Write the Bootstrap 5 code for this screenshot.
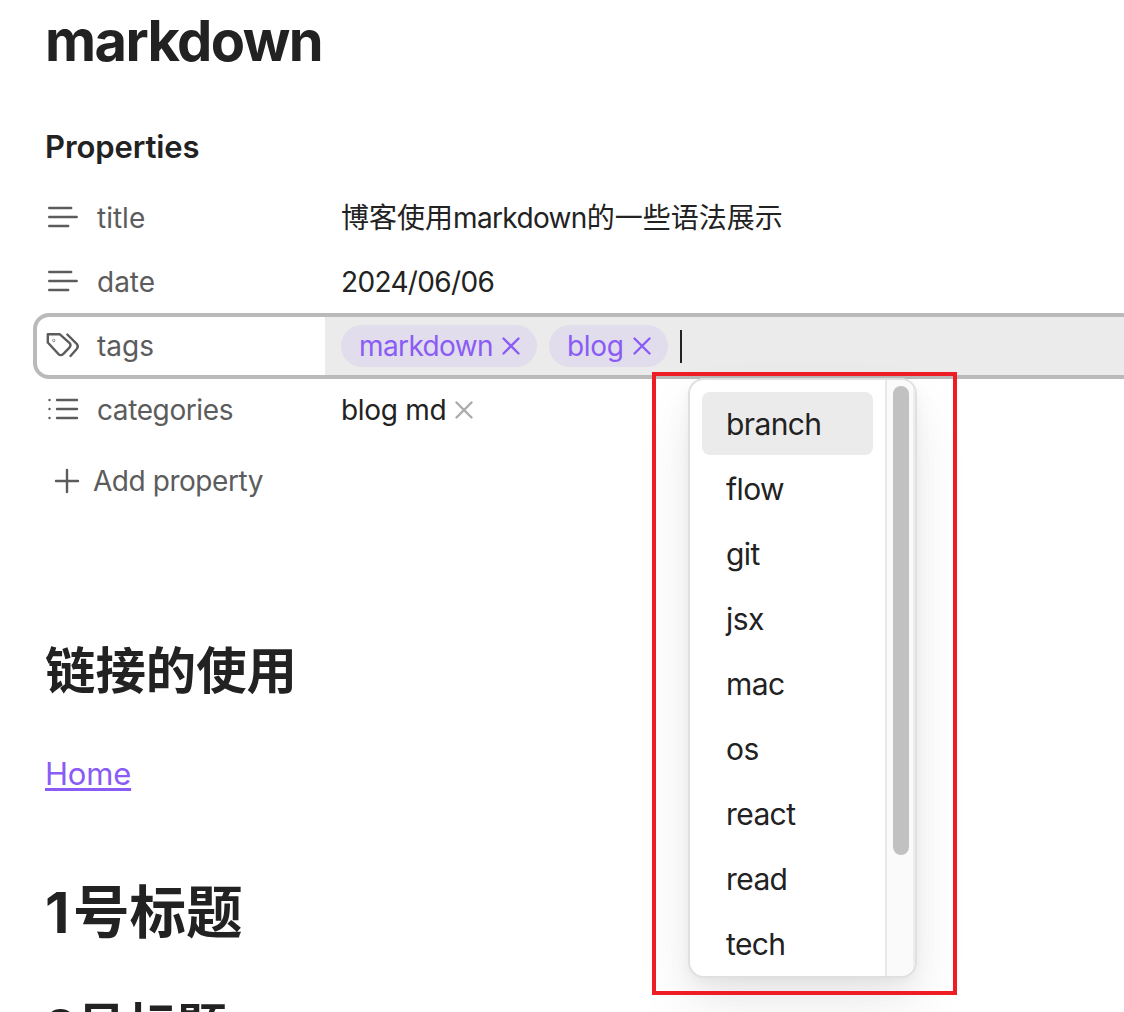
<!DOCTYPE html>
<html lang="zh-CN">
<head>
<meta charset="utf-8">
<meta name="viewport" content="width=device-width, initial-scale=1">
<title>markdown</title>
<link href="https://cdn.jsdelivr.net/npm/bootstrap@5.3.0/dist/css/bootstrap.min.css" rel="stylesheet">
<style>
  body { font-family: Inter, "Noto Sans CJK SC", sans-serif; font-size: 28px; color: #222; background: #fff; }
  .note { height: 1012px; padding-left: 45px; }
  .note-title { font-size: 56px; font-weight: 700; line-height: 82px; letter-spacing: -1.6px; }
  .props-heading { font-size: 31px; font-weight: 600; line-height: 40px; letter-spacing: -.1px; margin-top: 45px; margin-bottom: 22px; }
  .prop-row { height: 58px; margin: 0 -20px 6px -8px; }
  .prop-row.is-active { outline: 4px solid #bababa; border-radius: 12px; background: linear-gradient(90deg, #fff 288px, #ebebeb 288px); }
  .prop-key { width: 288px; color: #5c5c5c; padding-left: 8px; letter-spacing: -.4px; }
  .prop-key svg { width: 36px; height: 36px; margin-right: 16px; }
  .prop-key .short-key { letter-spacing: 0; }
  .prop-value { padding-left: 16px; }
  .latin-text { letter-spacing: -.65px; }
  .blog-text { letter-spacing: -.3px; }
  .line-icon { fill: none; stroke: currentColor; stroke-width: 2.4; stroke-linecap: round; stroke-linejoin: round; }
  .tag-pill { height: 42px; padding: 0 17px 0 18px; margin-right: 12px; background: #e1ddec; color: #8a5cf5; letter-spacing: -.6px; }
  .tag-pill .blog-text { letter-spacing: -.35px; }
  .close-icon { width: 18px; height: 18px; margin-left: 9px; }
  .caret { width: 2px; height: 33px; background: #222; }
  .add-prop { height: 60px; margin-top: 12px; padding-left: 4px; color: #5c5c5c; letter-spacing: -.45px; }
  .add-prop svg { width: 36px; height: 36px; margin-right: 8px; }
  .sec-a { font-size: 50.4px; font-weight: 700; line-height: 70px; margin-top: 125px; }
  .home-link { font-size: 31px; line-height: 46px; letter-spacing: -.2px; color: #8a5cf5; text-decoration-thickness: 3px; text-underline-offset: 3px; }
  .home-line { margin-top: 45px; }
  .sec-b { font-size: 56.6px; font-weight: 700; line-height: 80px; margin-top: 76px; }
  .sec-b .lead-digit { letter-spacing: 3.5px; }
  .sec-c { font-size: 50px; font-weight: 700; line-height: 70px; margin-top: 39px; }
  .callout-frame { left: 652px; top: 372px; width: 305px; height: 623px; border: 4px solid #ee1c25; z-index: 3; }
  .suggest { left: 688px; top: 378px; width: 229px; height: 600px; border: 2px solid #e0e0e0; border-radius: 16px; background: #fff; z-index: 2;
    box-shadow: 0 3px 8px rgba(0,0,0,.03), 0 12px 26px rgba(0,0,0,.045), 0 30px 60px rgba(0,0,0,.07); }
  .suggest-list { padding: 12px; font-size: 30px; letter-spacing: -.6px; }
  .suggest-item { height: 63px; margin-bottom: 2px; padding: 2px 0 0 24px; border-radius: 8px; }
  .suggest-item.selected { background: #ebebeb; }
  .suggest-track { width: 30px; border-left: 2px solid #e8e8e8; border-right: 2px solid #ededed; background: #fafafa; padding: 6px 4px 0 6px; }
  .suggest-thumb { width: 16px; height: 469px; background: #c1c1c1; }
</style>
<script src="https://cdn.jsdelivr.net/npm/bootstrap@5.3.0/dist/js/bootstrap.bundle.min.js"></script>
</head>
<body class="overflow-hidden">
<main class="note position-relative overflow-hidden">
  <h1 class="note-title m-0">markdown</h1>
  <div class="props-heading">Properties</div>

  <div class="prop-row d-flex">
    <div class="prop-key d-flex align-items-center"><svg class="line-icon" viewBox="0 0 36 36"><path d="M4.200 8h22M4.200 17h27.500M4.200 26h19"/></svg><span class="short-key">title</span></div>
    <div class="prop-value d-flex align-items-center"><span>博客使用<span class="latin-text">markdown</span>的一些语法展示</span></div>
  </div>
  <div class="prop-row d-flex">
    <div class="prop-key d-flex align-items-center"><svg class="line-icon" viewBox="0 0 36 36"><path d="M4.200 8h22M4.200 17h27.500M4.200 26h19"/></svg><span class="short-key">date</span></div>
    <div class="prop-value d-flex align-items-center"><span class="latin-text">2024/06/06</span></div>
  </div>
  <div class="prop-row is-active d-flex">
    <div class="prop-key d-flex align-items-center"><svg class="line-icon" viewBox="0 0 36 36"><path d="M2.800 6.200v8.300L13.200 25.800q2.600 2.600 5.200 0l6-6.200q2.200-2.400 0-4.800L14.600 6.200zM22.300 6.500l9.400 9.300q2.200 2.600 0 5.200L25.500 28"/><circle cx="8.800" cy="12.200" r=".3"/></svg><span class="short-key">tags</span></div>
    <div class="prop-value d-flex align-items-center">
      <span class="tag-pill rounded-pill d-flex align-items-center"><span>markdown</span><svg class="close-icon line-icon" viewBox="0 0 18 18"><path d="M1.500 1.500l15 15M16.500 1.500l-15 15"/></svg></span>
      <span class="tag-pill rounded-pill d-flex align-items-center"><span class="blog-text">blog</span><svg class="close-icon line-icon" viewBox="0 0 18 18"><path d="M1.500 1.500l15 15M16.500 1.500l-15 15"/></svg></span>
      <span class="caret"></span>
    </div>
  </div>
  <div class="prop-row d-flex">
    <div class="prop-key d-flex align-items-center"><svg class="line-icon" viewBox="0 0 36 36"><path d="M12 8h20M12 17h20M12 26h20M4.500 8h.01M4.500 17h.01M4.500 26h.01"/></svg><span>categories</span></div>
    <div class="prop-value d-flex align-items-center"><span class="blog-text">blog md</span><svg class="close-icon line-icon" viewBox="0 0 18 18" color="#ababab"><path d="M1.500 1.500l15 15M16.500 1.500l-15 15"/></svg></div>
  </div>
  <div class="add-prop d-flex align-items-center"><svg class="line-icon" viewBox="0 0 36 36"><path d="M18 7v22M7 18h22"/></svg><span>Add property</span></div>

  <h2 class="sec-a mb-0">链接的使用</h2>
  <div class="home-line"><a class="home-link" href="#">Home</a></div>
  <h1 class="sec-b mb-0"><span class="lead-digit">1</span>号标题</h1>
  <h2 class="sec-c mb-0">2号标题</h2>

  <div class="suggest position-absolute d-flex overflow-hidden">
    <div class="suggest-list flex-grow-1">
      <div class="suggest-item selected d-flex align-items-center">branch</div>
      <div class="suggest-item d-flex align-items-center">flow</div>
      <div class="suggest-item d-flex align-items-center">git</div>
      <div class="suggest-item d-flex align-items-center">jsx</div>
      <div class="suggest-item d-flex align-items-center">mac</div>
      <div class="suggest-item d-flex align-items-center">os</div>
      <div class="suggest-item d-flex align-items-center">react</div>
      <div class="suggest-item d-flex align-items-center">read</div>
      <div class="suggest-item d-flex align-items-center">tech</div>
    </div>
    <div class="suggest-track"><div class="suggest-thumb rounded-pill"></div></div>
  </div>
  <div class="callout-frame position-absolute"></div>
</main>
</body>
</html>
